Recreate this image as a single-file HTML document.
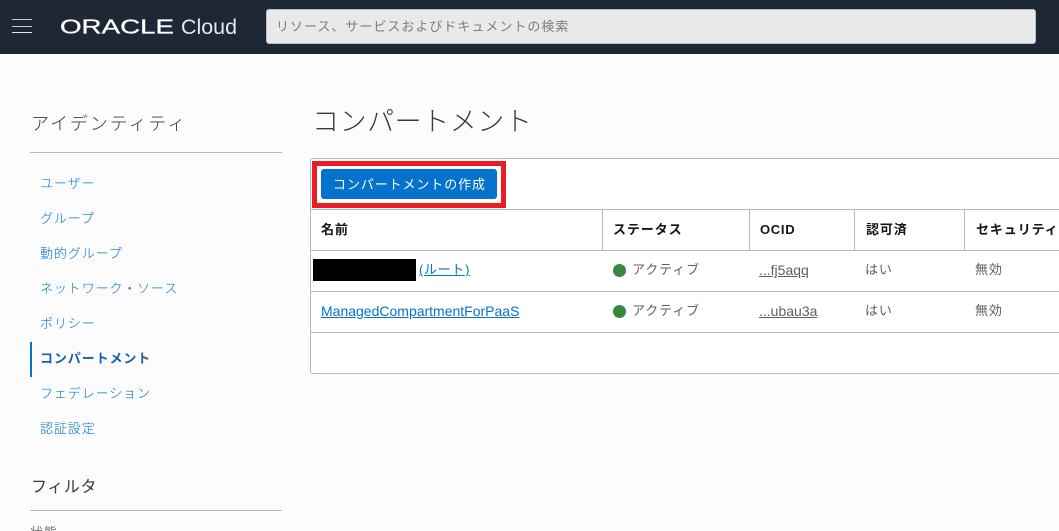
<!DOCTYPE html>
<html lang="ja">
<head>
<meta charset="utf-8">
<style>
html,body{margin:0;padding:0;width:1059px;height:531px;overflow:hidden}
body{background:#fcfcfd;font-family:"Liberation Sans","Noto Sans CJK JP",sans-serif;color:#3c3c3c}
#p{position:relative;width:1059px;height:531px;overflow:hidden}
.a{position:absolute;white-space:nowrap}
.n{left:40px;font-size:13px;color:#0572ce;letter-spacing:.9px;line-height:20px;font-weight:300}
.h{font-size:13px;font-weight:700;color:#161513;line-height:20px;letter-spacing:.9px}
.c{font-size:13px;color:#5f5f5f;line-height:20px;letter-spacing:.9px}
.l{position:absolute;background:#b3bac6}
</style>
</head>
<body>
<div id="p">
<div class="a" style="left:0;top:0;width:1059px;height:54px;background:#1d2735"></div>
<div class="a" style="left:12px;top:19px;width:20px;height:1px;background:#c9ccd0"></div>
<div class="a" style="left:12px;top:26px;width:20px;height:1px;background:#c9ccd0"></div>
<div class="a" style="left:12px;top:32px;width:20px;height:1px;background:#e4e6e8"></div>
<svg class="a" style="left:55px;top:10px" width="190" height="34">
<text x="5" y="23.5" font-family="Liberation Sans" font-size="20" fill="#fff" stroke="#fff" stroke-width=".3" textLength="114" lengthAdjust="spacingAndGlyphs">ORACLE</text>
<text x="126" y="24" font-family="Liberation Sans" font-size="21.5" fill="#e8e8e8" textLength="56" lengthAdjust="spacingAndGlyphs">Cloud</text>
</svg>
<div class="a" style="left:266px;top:9px;width:768px;height:33px;background:#e9e9e9;border:1px solid #b9bcc0;border-radius:3px"></div>
<div class="a" style="left:276px;top:17px;font-size:13px;line-height:20px;color:#7d7d7d;letter-spacing:1px">リソース、サービスおよびドキュメントの検索</div>

<div class="a" style="left:31px;top:111px;font-size:18px;line-height:26px;color:#3a3a3a;letter-spacing:1.9px;font-weight:300">アイデンティティ</div>
<div class="l" style="left:30px;top:152px;width:252px;height:1px"></div>
<div class="a n" style="top:174px">ユーザー</div>
<div class="a n" style="top:209px">グループ</div>
<div class="a n" style="top:244px">動的グループ</div>
<div class="a n" style="top:279px">ネットワーク・ソース</div>
<div class="a n" style="top:314px">ポリシー</div>
<div class="a" style="left:30px;top:342px;width:2px;height:35px;background:#0572ce"></div>
<div class="a n" style="top:349px;font-weight:700;color:#1b5fa8">コンパートメント</div>
<div class="a n" style="top:384px">フェデレーション</div>
<div class="a n" style="top:419px">認証設定</div>
<div class="a" style="left:31px;top:476px;font-size:16px;line-height:24px;color:#3a3a3a;letter-spacing:.6px">フィルタ</div>
<div class="l" style="left:30px;top:510px;width:252px;height:1px"></div>
<div class="a" style="left:30px;top:523px;font-size:13px;line-height:20px;color:#777;letter-spacing:.9px">状態</div>

<div class="a" style="left:312px;top:104px;font-size:27px;line-height:36px;color:#3a3a3a;letter-spacing:.55px;font-weight:300">コンパートメント</div>

<div class="a" style="left:310px;top:158px;width:760px;height:214px;background:#fff;border:1px solid #b3bac6;border-radius:3px"></div>
<div class="a" style="left:312px;top:161px;width:194px;height:47px;box-sizing:border-box;border:5px solid #ed1c24"></div>
<div class="a" style="left:321px;top:169px;width:176px;height:30px;background:#0572ce;border-radius:3px"></div>
<div class="a" style="left:333px;top:175px;font-size:13px;line-height:20px;color:#fff;letter-spacing:.9px">コンパートメントの作成</div>

<div class="l" style="left:311px;top:209px;width:748px;height:1px"></div>
<div class="l" style="left:311px;top:250px;width:748px;height:1px"></div>
<div class="l" style="left:311px;top:291px;width:748px;height:1px"></div>
<div class="l" style="left:311px;top:332px;width:748px;height:1px"></div>
<div class="l" style="left:602px;top:209px;width:1px;height:41px"></div>
<div class="l" style="left:749px;top:209px;width:1px;height:41px"></div>
<div class="l" style="left:854px;top:209px;width:1px;height:41px"></div>
<div class="l" style="left:964px;top:209px;width:1px;height:41px"></div>

<div class="a h" style="left:321px;top:220px">名前</div>
<div class="a h" style="left:613px;top:220px">ステータス</div>
<div class="a h" style="left:760px;top:220px;letter-spacing:.7px">OCID</div>
<div class="a h" style="left:866px;top:220px">認可済</div>
<div class="a h" style="left:976px;top:220px">セキュリティ</div>

<div class="a" style="left:313px;top:259px;width:103px;height:22px;background:#000"></div>
<div class="a" style="left:416px;top:260px;font-size:13px;line-height:20px;color:#0572ce;text-decoration:underline;letter-spacing:.7px;padding-left:3px">(ルート)</div>
<div class="a" style="left:321px;top:301px;font-size:14px;line-height:20px;color:#0572ce;text-decoration:underline">ManagedCompartmentForPaaS</div>

<div class="a" style="left:613px;top:264px;width:13px;height:13px;border-radius:50%;background:#37873d"></div>
<div class="a c" style="left:632px;top:260px">アクティブ</div>
<div class="a" style="left:613px;top:305px;width:13px;height:13px;border-radius:50%;background:#37873d"></div>
<div class="a c" style="left:632px;top:301px">アクティブ</div>

<div class="a c" style="left:759px;top:260px;text-decoration:underline;letter-spacing:0;font-size:14px">...fj5aqq</div>
<div class="a c" style="left:759px;top:301px;text-decoration:underline;letter-spacing:0;font-size:14px">...ubau3a</div>
<div class="a c" style="left:865px;top:260px">はい</div>
<div class="a c" style="left:865px;top:301px">はい</div>
<div class="a c" style="left:975px;top:260px">無効</div>
<div class="a c" style="left:975px;top:301px">無効</div>
</div>
</body>
</html>
